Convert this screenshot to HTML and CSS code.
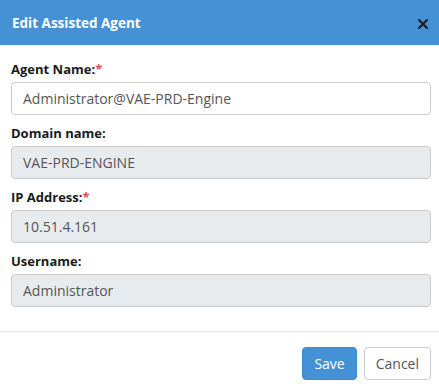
FILE: index.html
```html
<!DOCTYPE html>
<html lang="en">
<head>
    <meta charset="UTF-8">
    <meta name="viewport" content="width=device-width, initial-scale=1.0">
    <title>Edit Assisted Agent</title>
    <link rel="stylesheet" href="styles.css">
</head>
<body>
    <div class="modal">
        <div class="modal-header">
            <div class="modal-title">Edit Assisted Agent</div>
            <div class="close">
                <svg width="10" height="10" viewBox="0 0 10 10">
                    <path d="M1 1L9 9M9 1L1 9" stroke="#1f1f1f" stroke-width="2.2" stroke-linecap="square"/>
                </svg>
            </div>
        </div>
        <div class="modal-body">
            <div class="field">
                <label>Agent Name:<span class="req">*</span></label>
                <input type="text" class="input" value="Administrator@VAE-PRD-Engine">
            </div>
            <div class="field">
                <label>Domain name:</label>
                <input type="text" class="input" value="VAE-PRD-ENGINE" disabled>
            </div>
            <div class="field">
                <label>IP Address:<span class="req">*</span></label>
                <input type="text" class="input" value="10.51.4.161" disabled>
            </div>
            <div class="field">
                <label>Username:</label>
                <input type="text" class="input" value="Administrator" disabled>
            </div>
        </div>
        <div class="modal-footer">
            <button class="btn btn-primary">Save</button>
            <button class="btn btn-default">Cancel</button>
        </div>
    </div>
</body>
</html>
```

FILE: styles.css
```css
html {
    overflow: hidden;
}
body {
    margin: 0;
    background-color: #fff;
    color: #333;
    font-family: "Open Sans", Arial, sans-serif;
    font-size: 13px;
}
.modal {
    width: 439px;
}
.modal-header {
    background-color: #4591d5;
    color: #fff;
    height: 45px;
    display: flex;
    align-items: center;
    justify-content: space-between;
    padding: 0 11px 0 12px;
    box-sizing: border-box;
}
.modal-title {
    font-size: 13.5px;
    font-weight: bold;
}
.close {
    display: flex;
    margin-top: 2px;
}
.modal-body {
    padding: 15px 8px 24px 11px;
}
.field {
    margin-bottom: 9px;
}
.field:last-child {
    margin-bottom: 0;
}
label {
    display: block;
    font-weight: bold;
    color: #1a1a1a;
    font-size: 13px;
    line-height: 18px;
    margin-bottom: 4px;
}
.req {
    color: #d9534f;
}
.input {
    display: block;
    width: 100%;
    box-sizing: border-box;
    height: 33px;
    padding: 0 11px;
    border: 1px solid #ccc;
    border-radius: 4px;
    font-family: "Open Sans", Arial, sans-serif;
    font-size: 14px;
    color: #555;
    background-color: #fff;
}
.input:disabled {
    background-color: #e8ebee;
    color: #555;
}
.modal-footer {
    border-top: 1px solid #e5e5e5;
    display: flex;
    justify-content: flex-end;
    gap: 7px;
    padding: 15px 8px 9px 0;
}
.btn {
    height: 33px;
    padding: 0 11px;
    font-family: "Open Sans", Arial, sans-serif;
    font-size: 14px;
    border-radius: 4px;
    border: 1px solid #ccc;
}
.btn-primary {
    background-color: #4591d5;
    border-color: #3d87cb;
    color: #fff;
}
.btn-default {
    background-color: #fff;
    color: #555;
}
```
